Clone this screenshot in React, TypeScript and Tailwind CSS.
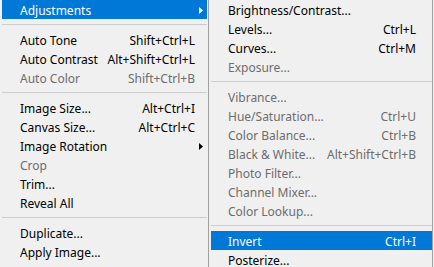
type Item =
  | { sep: true }
  | { label: string; shortcut?: string; disabled?: boolean; active?: boolean; sub?: boolean; sep?: false }

const imageMenu: Item[] = [
  { label: 'Adjustments', active: true, sub: true },
  { sep: true },
  { label: 'Auto Tone', shortcut: 'Shift+Ctrl+L' },
  { label: 'Auto Contrast', shortcut: 'Alt+Shift+Ctrl+L' },
  { label: 'Auto Color', shortcut: 'Shift+Ctrl+B', disabled: true },
  { sep: true },
  { label: 'Image Size...', shortcut: 'Alt+Ctrl+I' },
  { label: 'Canvas Size...', shortcut: 'Alt+Ctrl+C' },
  { label: 'Image Rotation', sub: true },
  { label: 'Crop', disabled: true },
  { label: 'Trim...' },
  { label: 'Reveal All' },
  { sep: true },
  { label: 'Duplicate...' },
  { label: 'Apply Image...' },
]

const adjustMenu: Item[] = [
  { label: 'Brightness/Contrast...' },
  { label: 'Levels...', shortcut: 'Ctrl+L' },
  { label: 'Curves...', shortcut: 'Ctrl+M' },
  { label: 'Exposure...', disabled: true },
  { sep: true },
  { label: 'Vibrance...', disabled: true },
  { label: 'Hue/Saturation...', shortcut: 'Ctrl+U', disabled: true },
  { label: 'Color Balance...', shortcut: 'Ctrl+B', disabled: true },
  { label: 'Black & White...', shortcut: 'Alt+Shift+Ctrl+B', disabled: true },
  { label: 'Photo Filter...', disabled: true },
  { label: 'Channel Mixer...', disabled: true },
  { label: 'Color Lookup...', disabled: true },
  { sep: true },
  { label: 'Invert', shortcut: 'Ctrl+I', active: true },
  { label: 'Posterize...' },
]

function Arrow({ white }: { white?: boolean }) {
  return (
    <svg width="4" height="7" viewBox="0 0 4 7" className="shrink-0 -mr-[8px] -mt-[2px]">
      <path d="M0 0 L4 3.5 L0 7 Z" fill={white ? '#ffffff' : '#000000'} />
    </svg>
  )
}

function Menu({ items, textPad, rightPad }: { items: Item[]; textPad: string; rightPad: string }) {
  return (
    <div className="flex flex-col">
      {items.map((it, i) => {
        if (it.sep) {
          return (
            <div key={i} className="h-[11px] flex items-center">
              <div className="h-px w-full bg-[#cdcdcd]" />
            </div>
          )
        }
        const color = it.active ? 'text-white' : it.disabled ? 'text-[#6d6d6d]' : 'text-black'
        return (
          <div
            key={i}
            className={`h-[19px] pt-[3px] flex items-center ${textPad} ${rightPad} ${color} ${it.active ? 'bg-[#0078d7]' : ''}`}
          >
            <span className="flex-1 whitespace-nowrap">{it.label}</span>
            {it.shortcut && <span className="whitespace-nowrap">{it.shortcut}</span>}
            {it.sub && <Arrow white={it.active} />}
          </div>
        )
      })}
    </div>
  )
}

export default function App() {
  return (
    <div
      className="flex w-[434px] h-[267px] overflow-hidden bg-[#f0f0f0] text-[12px] leading-none"
      style={{ fontFamily: '"Noto Sans", sans-serif' }}
    >
      <div className="w-[208px] shrink-0 pl-[2px] pr-[1px]">
        <Menu items={imageMenu} textPad="pl-[18px]" rightPad="pr-[12px]" />
      </div>
      <div className="w-[225px] shrink-0 border-l border-r border-[#a0a0a0] pl-[2px]">
        <Menu items={adjustMenu} textPad="pl-[17px]" rightPad="pr-[16px]" />
      </div>
    </div>
  )
}
